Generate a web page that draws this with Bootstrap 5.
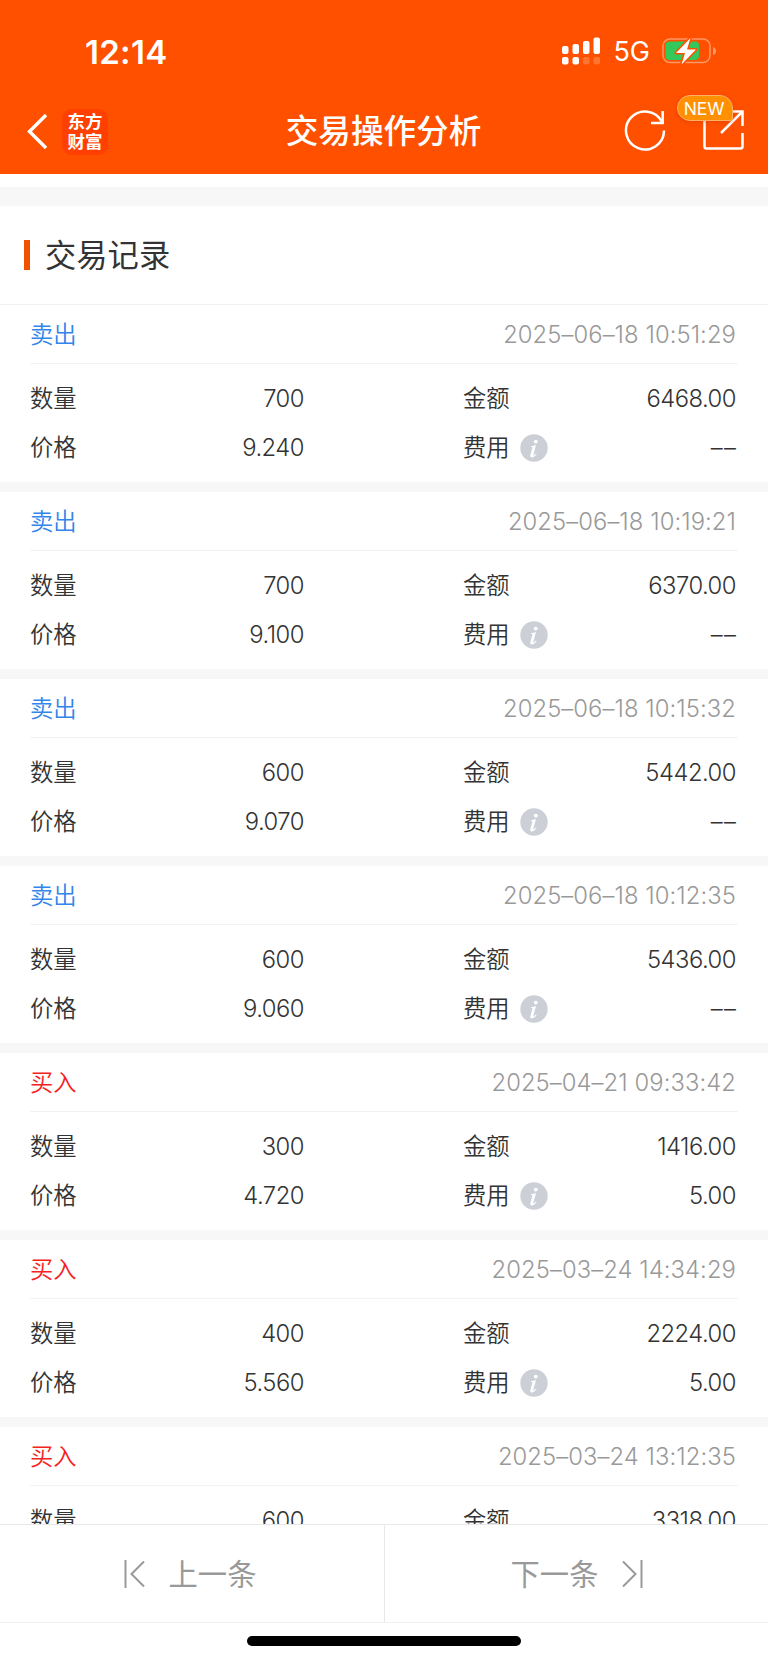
<!DOCTYPE html>
<html lang="zh-CN">
<head>
<meta charset="utf-8">
<meta name="viewport" content="width=device-width, initial-scale=1">
<title>交易操作分析</title>
<link href="https://cdn.jsdelivr.net/npm/bootstrap@5.3.0/dist/css/bootstrap.min.css" rel="stylesheet">
<style>
body{font-family:Inter,"Noto Sans CJK SC",sans-serif;color:#333;background:#fff;line-height:1}
.screen{height:1663px}
.top{height:173.5px;background:#ff5000;color:#fff}
.status{height:102px;padding:0 52px 0 85px}
.clock{font-size:33px;font-weight:600;letter-spacing:.3px;line-height:104px}
.net{font-size:27px;letter-spacing:0;line-height:102px;margin:2px 12px 0}
.navrow{height:71px;padding:0 24px 0 27px}
.side{width:150px}
.logo{width:46px;height:46px;border-radius:9px;background:#ff4000;font:700 17.5px/19.5px "Noto Sans CJK SC",sans-serif;margin-left:15px;padding-bottom:2px}
.heading{font:500 32.6px/40px "Noto Sans CJK SC",sans-serif;margin:7px 4px 0 0}
.share{width:42px;height:42px}
.refresh{margin-right:35px}
.newtag{top:-15px;left:-25px;width:56px;height:26px;border-radius:13px 13px 3px 13px;background:#ff9000;border:1px solid #ffb066;font-size:17.5px;letter-spacing:-.1px;line-height:25px;padding-right:2px;box-shadow:0 1px 4px rgba(180,40,0,.3)}
.strip{height:19px;margin-top:13.5px;background:#f7f7f7}
.section{height:99px;border-bottom:1px solid #f0f0f0;padding-left:23.5px}
.mark-bar{width:6.500px;height:30px;background:#f05000}
.section h2{font:400 31.3px/40px "Noto Sans CJK SC",sans-serif;margin:0 0 2px 15px}
.record{height:187px;padding:0 30px;border-bottom:10px solid #f7f7f7}
.rec-head{height:59px;border-bottom:1px solid #f2f2f2;padding:1px 2px 0 0}
.rec-head,.rec-row{font-size:23.3px;font-weight:350}
.rec-body{padding:10px 2px 0 0}
.rec-row{height:49.4px}
.num{font-family:Inter,sans-serif;letter-spacing:-.5px;font-size:23.8px}
.date{color:#999;font-weight:300;letter-spacing:.08px}
.none{letter-spacing:1.500px;margin-right:-1.500px}
.sell{color:#3385eb}.buy{color:#f52222}
.col-a{width:274px}.col-b{width:273px}
.records{height:1219px}
.pager{height:99px;border-top:1px solid #e8e8e8;border-bottom:1px solid #f0f0f0;color:#999;font:400 29.3px/40px "Noto Sans CJK SC",sans-serif}
.pager span{margin-bottom:3px}
.pager>div:first-child{padding-right:4px}
.pager>div+div{border-left:1px solid #e8e8e8;padding-left:1px}
.homebar{width:274px;height:10px;border-radius:5px;background:#000;margin-top:13px}
.info{margin-left:10px}
</style>
</head>
<body>
<main class="screen d-flex flex-column overflow-hidden">
<header class="top flex-shrink-0">
  <div class="status d-flex justify-content-between">
    <span class="clock">12:14</span>
    <div class="d-flex align-items-center">
      <svg width="39" height="28" viewBox="0 0 39 28" fill="#fff"><rect x="0" y="9" width="6.5" height="8" rx="2"/><rect x="10.5" y="7" width="6.5" height="10" rx="2"/><rect x="21" y="4" width="6.5" height="13" rx="2"/><rect x="31.5" y="0.5" width="6.5" height="16.5" rx="2"/><rect x="0" y="20" width="6.5" height="7.5" rx="2"/><rect x="10.5" y="20" width="6.5" height="7.5" rx="2"/><g opacity=".2"><rect x="21" y="20" width="6.5" height="7.5" rx="2"/><rect x="31.5" y="20" width="6.5" height="7.5" rx="2"/></g></svg>
      <span class="net">5G</span>
      <svg width="54" height="28" viewBox="0 0 54 28"><rect x="1" y="2" width="47" height="23.5" rx="7" fill="none" stroke="#ff9666" stroke-width="1.5"/><path d="M51 10q3 1 3 4t-3 4z" fill="#ff9666"/><rect x="3.5" y="4.5" width="33.5" height="18.5" rx="4" fill="#34c759"/><path d="M28.500 1L14 16h9L19.500 27.500 34 12.500h-9z" fill="#fff" stroke="#ff5000" stroke-width="3" stroke-linejoin="round" paint-order="stroke"/></svg>
    </div>
  </div>
  <nav class="navrow d-flex justify-content-between">
    <div class="side d-flex align-items-center pb-3 mt-1">
      <svg width="20" height="35" viewBox="0 0 20 35" fill="none" stroke="#fff" stroke-width="3.4"><path d="M19 1L2.500 17.500 19 34"/></svg>
      <div class="logo d-flex flex-column justify-content-center align-items-center"><span>东方</span><span>财富</span></div>
    </div>
    <h1 class="heading">交易操作分析</h1>
    <div class="side d-flex justify-content-end">
      <svg class="refresh mt-1 flex-shrink-0" width="44" height="46" viewBox="0 0 44 46" fill="none" stroke="#fff" stroke-width="2.500"><path d="M41 24.500A19 19 0 1 1 39 16M39.700 5v12H28"/></svg>
      <div class="share position-relative mt-2 flex-shrink-0">
        <svg width="42" height="42" viewBox="0 0 42 42" fill="none" stroke="#fff" stroke-width="2.500"><path d="M2.500 8V36.500q0 2 2 2h34q2 0 2-2V23M28 1.500h12.500V16M40 2L19 23"/></svg>
        <span class="newtag position-absolute text-center">NEW</span>
      </div>
    </div>
  </nav>
</header>
<div class="strip flex-shrink-0"></div>
<section class="section d-flex align-items-center flex-shrink-0"><i class="mark-bar"></i><h2>交易记录</h2></section>
<div class="records overflow-hidden flex-shrink-0" id="records"></div>
<footer class="flex-shrink-0">
  <div class="pager d-flex">
    <div class="w-50 d-flex align-items-center justify-content-center"><svg class="me-4" width="21" height="28" viewBox="0 0 21 28" fill="none" stroke="#999" stroke-width="2"><path d="M1.500 0v28M20 1.500L7.500 14 20 26.500"/></svg><span>上一条</span></div>
    <div class="w-50 d-flex align-items-center justify-content-center"><span>下一条</span><svg class="ms-4" width="21" height="28" viewBox="0 0 21 28" fill="none" stroke="#999" stroke-width="2"><path d="M19.500 0v28M1 1.500L13.500 14 1 26.500"/></svg></div>
  </div>
  <div class="homebar mx-auto"></div>
</footer>
</main>
<script src="https://cdn.jsdelivr.net/npm/bootstrap@5.3.0/dist/js/bootstrap.bundle.min.js"></script>
<script>
const trades = [
  ['卖出','2025–06–18 10:51:29','700','6468.00','9.240','––'],
  ['卖出','2025–06–18 10:19:21','700','6370.00','9.100','––'],
  ['卖出','2025–06–18 10:15:32','600','5442.00','9.070','––'],
  ['卖出','2025–06–18 10:12:35','600','5436.00','9.060','––'],
  ['买入','2025–04–21 09:33:42','300','1416.00','4.720','5.00'],
  ['买入','2025–03–24 14:34:29','400','2224.00','5.560','5.00'],
  ['买入','2025–03–24 13:12:35','600','3318.00','5.530','5.00']
];
const info = '<svg class="info" width="28" height="28" viewBox="0 0 28 28"><circle cx="14" cy="14" r="13.700" fill="#ccd0d6"/><circle cx="15.800" cy="7.600" r="1.900" fill="#fff"/><path d="M11 12.200q2.500-.2 5-1.200l-2.600 9.500q-.3 1.300.7.700l1.800-1.700.7.700q-2.500 3.200-4.800 3.200-2 0-1.400-2.400l2-7.200q.3-1-1.400-.8z" fill="#fff"/></svg>';
document.getElementById('records').innerHTML = trades.map(([side, time, qty, amount, price, fee]) => `
<article class="record">
  <div class="rec-head d-flex justify-content-between align-items-center"><span class="${side === '卖出' ? 'sell' : 'buy'}">${side}</span><span class="num date">${time}</span></div>
  <div class="rec-body">
    <div class="rec-row d-flex justify-content-between align-items-center"><div class="col-a d-flex justify-content-between"><span>数量</span><span class="num">${qty}</span></div><div class="col-b d-flex justify-content-between"><span>金额</span><span class="num">${amount}</span></div></div>
    <div class="rec-row d-flex justify-content-between align-items-center"><div class="col-a d-flex justify-content-between"><span>价格</span><span class="num">${price}</span></div><div class="col-b d-flex justify-content-between align-items-center"><span class="d-flex align-items-center">费用${info}</span><span class="num ${fee === '––' ? 'none' : ''}">${fee}</span></div></div>
  </div>
</article>`).join('');
</script>
</body>
</html>
